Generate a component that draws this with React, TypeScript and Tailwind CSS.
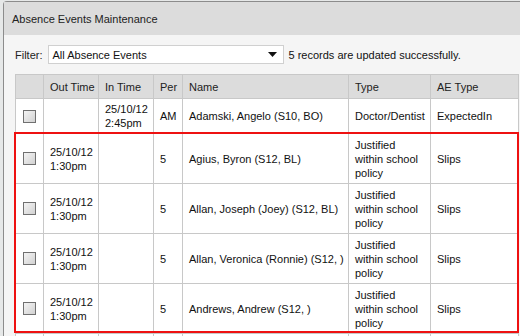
import React from 'react';

type Row = {
  out: string[];
  inTime: string[];
  per: string;
  name: string;
  type: string[];
  ae: string;
};

const rows: Row[] = [
  { out: [], inTime: ['25/10/12', '2:45pm'], per: 'AM', name: 'Adamski, Angelo (S10, BO)', type: ['Doctor/Dentist'], ae: 'ExpectedIn' },
  { out: ['25/10/12', '1:30pm'], inTime: [], per: '5', name: 'Agius, Byron (S12, BL)', type: ['Justified', 'within school', 'policy'], ae: 'Slips' },
  { out: ['25/10/12', '1:30pm'], inTime: [], per: '5', name: 'Allan, Joseph (Joey) (S12, BL)', type: ['Justified', 'within school', 'policy'], ae: 'Slips' },
  { out: ['25/10/12', '1:30pm'], inTime: [], per: '5', name: 'Allan, Veronica (Ronnie) (S12, )', type: ['Justified', 'within school', 'policy'], ae: 'Slips' },
  { out: ['25/10/12', '1:30pm'], inTime: [], per: '5', name: 'Andrews, Andrew (S12, )', type: ['Justified', 'within school', 'policy'], ae: 'Slips' },
];

const Checkbox = () => (
  <div className="mx-auto w-[13px] h-[13px] border border-[#707070] bg-gradient-to-br from-[#f4f4f4] to-[#d2d2d2]" />
);

const Lines = ({ lines }: { lines: string[] }) => (
  <>
    {lines.map((l, i) => (
      <div key={i}>{l}</div>
    ))}
  </>
);

const cell = 'border border-[#c8c8c8] px-[6px] py-0 align-middle text-left whitespace-nowrap overflow-hidden';

export default function App() {
  return (
    <div
      className="w-[520px] h-[336px] overflow-hidden bg-[#e6e8e8] pl-[3px] pt-[1px] text-[11px] leading-[14px] text-[#111]"
      style={{ fontFamily: '"Liberation Sans", Arial, sans-serif' }}
    >
      <div className="h-[400px] rounded-tl-[4px] border-l border-t border-[#8c8c8c] bg-[#f5f5f5]">
        <div className="h-[33px] bg-[#dcdcdc] pl-[8px] flex items-center text-[#222]">
          Absence Events Maintenance
        </div>

        <div className="flex items-center mt-[10px] pl-[11px] h-[19px]">
          <span className="text-[#222]">Filter:</span>
          <div className="ml-[5px] w-[236px] h-[19px] bg-white border border-[#d0d0d0] flex items-center justify-between pl-[4px] pr-[6px]">
            <span>All Absence Events</span>
            <svg width="9" height="5" viewBox="0 0 9 5">
              <path d="M0 0 L9 0 L4.5 5 Z" fill="#111" />
            </svg>
          </div>
          <span className="ml-[5px]">5 records are updated successfully.</span>
        </div>

        <div className="relative ml-[11px] mt-[10px] w-[503px]">
          <table className="border-collapse table-fixed w-[503px]">
            <colgroup>
              <col className="w-[28px]" />
              <col className="w-[55px]" />
              <col className="w-[55px]" />
              <col className="w-[29px]" />
              <col className="w-[166px]" />
              <col className="w-[82px]" />
              <col className="w-[88px]" />
            </colgroup>
            <thead>
              <tr className="h-[24px] bg-[#dcdcdc] text-[#222]">
                <th className={`${cell} font-normal`} />
                <th className={`${cell} font-normal`}>Out Time</th>
                <th className={`${cell} font-normal`}>In Time</th>
                <th className={`${cell} font-normal`}>Per</th>
                <th className={`${cell} font-normal`}>Name</th>
                <th className={`${cell} font-normal`}>Type</th>
                <th className={`${cell} font-normal`}>AE Type</th>
              </tr>
            </thead>
            <tbody className="bg-white">
              {rows.map((r, i) => (
                <tr key={i} className={i === 0 ? 'h-[35px]' : 'h-[50px]'}>
                  <td className="border border-[#c8c8c8] align-middle">
                    <Checkbox />
                  </td>
                  <td className={cell}><Lines lines={r.out} /></td>
                  <td className={cell}><Lines lines={r.inTime} /></td>
                  <td className={cell}>{r.per}</td>
                  <td className={cell}>{r.name}</td>
                  <td className={cell}><Lines lines={r.type} /></td>
                  <td className={cell}>{r.ae}</td>
                </tr>
              ))}
              <tr className="h-[30px]">
                <td className="border border-[#c8c8c8]" />
                <td className="border border-[#c8c8c8]" />
                <td className="border border-[#c8c8c8]" />
                <td className="border border-[#c8c8c8]" />
                <td className="border border-[#c8c8c8]" />
                <td className="border border-[#c8c8c8]" />
                <td className="border border-[#c8c8c8]" />
              </tr>
            </tbody>
          </table>
          <div className="absolute left-[-1px] top-[58px] w-[505px] h-[201px] border-2 border-[#ee1111] pointer-events-none" />
        </div>
      </div>
    </div>
  );
}
